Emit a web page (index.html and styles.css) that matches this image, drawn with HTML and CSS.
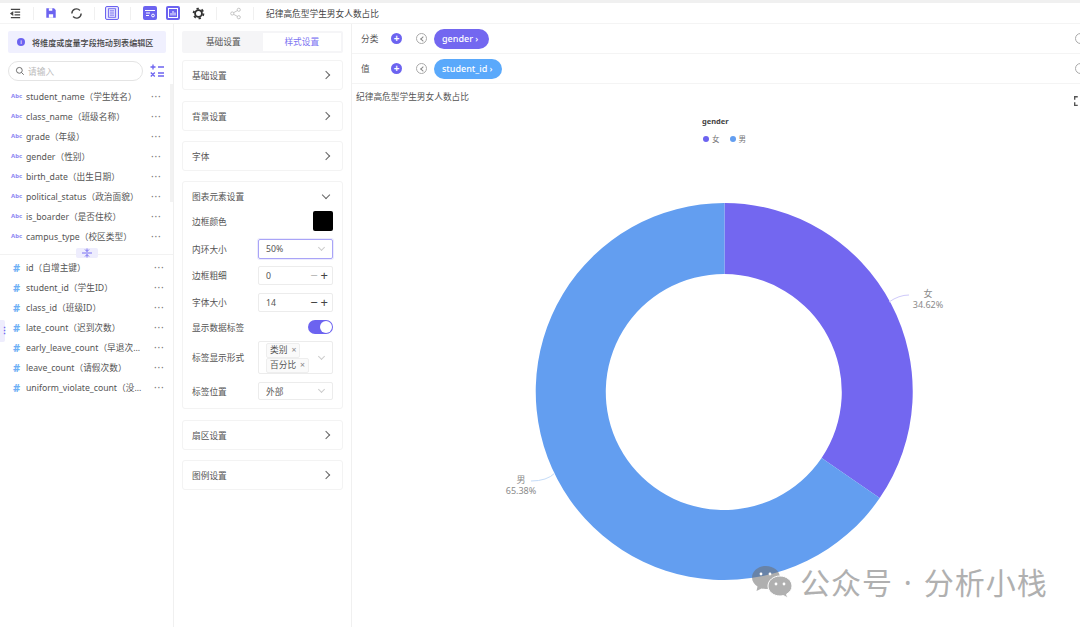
FILE: index.html
```html
<!DOCTYPE html>
<html lang="en">
<head>
    <meta charset="UTF-8">
    <title>纪律高危型学生男女人数占比</title>
    <link rel="stylesheet" href="styles.css">
</head>
<body>
    <div class="toolbar">
        <svg class="tool tool-first" viewBox="0 0 14 14" fill="none" stroke="#444" stroke-width="1.2"><path d="M2 2.500h10M6 5.500h6M6 8.500h6M2 11.500h10"/><path d="M4 5.500 2 7l2 1.500z" fill="#444"/></svg>
        <span class="sep sep-1"></span>
        <svg class="tool tool-save" viewBox="0 0 14 14"><path d="M1.500 1.500h9l2 2v9h-11z" fill="#6c63f0"/><path d="M4.500 1.500h4v3h-4zM4.500 8.500h5v4h-5z" fill="#fff"/></svg>
        <svg class="tool tool-refresh" viewBox="0 0 14 14" fill="none" stroke="#444" stroke-width="1.500"><path d="M12 7a5 5 0 0 1-8.700 3.300"/><path d="M2 7a5 5 0 0 1 8.700-3.300"/></svg>
        <span class="sep sep-2"></span>
        <span class="tool-box tool-doc"><svg viewBox="0 0 14 14" fill="none" stroke="#6c63f0" stroke-width="1"><rect x="3" y="2" width="8" height="10"/><path d="M4.500 4.500h5M4.500 7h5M4.500 9.500h5"/></svg></span>
        <span class="sep sep-3"></span>
        <span class="tool-box tool-win"><svg viewBox="0 0 14 14" fill="none" stroke="#fff" stroke-width="1"><path d="M2 4.500h10M3 7h4M3 9.500h3"/><circle cx="10" cy="9.500" r="1.400"/></svg></span>
        <span class="tool-box tool-chart"><svg viewBox="0 0 14 14" fill="none" stroke="#fff" stroke-width="1"><rect x="2.500" y="2.500" width="9" height="9"/><path d="M5 9.500V7M7 9.500V5M9 9.500V6.500"/></svg></span>
        <svg class="tool tool-gear" viewBox="0 0 14 14" fill="none" stroke="#333"><circle cx="7" cy="7" r="3.700" stroke-width="2"/><circle cx="7" cy="7" r="5.300" stroke-width="2" stroke-dasharray="2.500 3.050"/></svg>
        <span class="sep sep-4"></span>
        <svg class="tool tool-share" viewBox="0 0 14 14" fill="none" stroke="#bbb" stroke-width=".9"><circle cx="3.500" cy="7" r="1.700"/><circle cx="10.500" cy="3" r="1.700"/><circle cx="10.500" cy="11" r="1.700"/><path d="M5 6.100 9 3.900M5 7.900l4 2.200"/></svg>
        <span class="sep sep-5"></span>
        <span class="toolbar-title">纪律高危型学生男女人数占比</span>
    </div>

    <div class="main">
        <div class="fields">
            <div class="notice"><span class="notice-dot">i</span>将维度或度量字段拖动到表编辑区</div>
            <div class="search-row">
                <div class="search">
                    <svg viewBox="0 0 12 12" fill="none" stroke="#555" stroke-width="1"><circle cx="5.200" cy="5.200" r="3.500"/><path d="m8 8 2.500 2.500"/></svg>
                    <span>请输入</span>
                </div>
                <svg class="calc" viewBox="0 0 14 14" fill="none" stroke="#6c63f0" stroke-width="1.300"><path d="M0.500 3h5M3 0.500v5M8 3h6M0.800 8.500l4 4M4.800 8.500l-4 4M8 9h6M8 12h6"/></svg>
            </div>
            <div class="field-list dims">
                <div class="field"><span class="abc">Abc</span><span class="field-name">student_name（学生姓名）</span><span class="more">···</span></div>
                <div class="field"><span class="abc">Abc</span><span class="field-name">class_name（班级名称）</span><span class="more">···</span></div>
                <div class="field"><span class="abc">Abc</span><span class="field-name">grade（年级）</span><span class="more">···</span></div>
                <div class="field"><span class="abc">Abc</span><span class="field-name">gender（性别）</span><span class="more">···</span></div>
                <div class="field"><span class="abc">Abc</span><span class="field-name">birth_date（出生日期）</span><span class="more">···</span></div>
                <div class="field"><span class="abc">Abc</span><span class="field-name">political_status（政治面貌）</span><span class="more">···</span></div>
                <div class="field"><span class="abc">Abc</span><span class="field-name">is_boarder（是否住校）</span><span class="more">···</span></div>
                <div class="field"><span class="abc">Abc</span><span class="field-name">campus_type（校区类型）</span><span class="more">···</span></div>
                <span class="scrollbar"></span>
            </div>
            <div class="splitter">
                <span class="grip"><svg viewBox="0 0 22 10" fill="none" stroke="#6c63f0" stroke-width=".9"><path d="M6 5h10M9 1.500l2 2 2-2M11 .5v3M9 8.500l2-2 2 2M11 6.500v3"/></svg></span>
            </div>
            <div class="field-list measures">
                <div class="field"><span class="hash">#</span><span class="field-name">id（自增主键）</span><span class="more">···</span></div>
                <div class="field"><span class="hash">#</span><span class="field-name">student_id（学生ID）</span><span class="more">···</span></div>
                <div class="field"><span class="hash">#</span><span class="field-name">class_id（班级ID）</span><span class="more">···</span></div>
                <div class="field"><span class="hash">#</span><span class="field-name">late_count（迟到次数）</span><span class="more">···</span></div>
                <div class="field"><span class="hash">#</span><span class="field-name">early_leave_count（早退次...</span><span class="more">···</span></div>
                <div class="field"><span class="hash">#</span><span class="field-name">leave_count（请假次数）</span><span class="more">···</span></div>
                <div class="field"><span class="hash">#</span><span class="field-name">uniform_violate_count（没...</span><span class="more">···</span></div>
            </div>
            <span class="side-handle">⋮</span>
        </div>

        <div class="settings">
            <div class="tabs">
                <span class="tab">基础设置</span>
                <span class="tab tab-active">样式设置</span>
            </div>
            <div class="card card-first"><span>基础设置</span><span class="chev"></span></div>
            <div class="card"><span>背景设置</span><span class="chev"></span></div>
            <div class="card"><span>字体</span><span class="chev"></span></div>
            <div class="card-open">
                <div class="open-head"><span>图表元素设置</span><span class="chev chev-down"></span></div>
                <div class="prop prop-color"><span>边框颜色</span><span class="swatch"></span></div>
                <div class="prop prop-ring"><span>内环大小</span><div class="input input-focus"><span>50%</span><span class="caret"></span></div></div>
                <div class="prop prop-num"><span>边框粗细</span><div class="input"><span>0</span><span class="stepper"><i class="dim">−</i><i>+</i></span></div></div>
                <div class="prop prop-num"><span>字体大小</span><div class="input"><span>14</span><span class="stepper"><i>−</i><i>+</i></span></div></div>
                <div class="prop prop-switch"><span>显示数据标签</span><span class="switch"></span></div>
                <div class="prop prop-tags"><span>标签显示形式</span>
                    <div class="input input-tags">
                        <div class="tags"><span class="tag">类别<b>×</b></span><span class="tag">百分比<b>×</b></span></div>
                        <span class="caret"></span>
                    </div>
                </div>
                <div class="prop prop-pos"><span>标签位置</span><div class="input"><span>外部</span><span class="caret"></span></div></div>
            </div>
            <div class="card"><span>扇区设置</span><span class="chev"></span></div>
            <div class="card"><span>图例设置</span><span class="chev"></span></div>
        </div>

        <div class="content">
            <div class="shelf">
                <span class="shelf-label">分类</span>
                <span class="plus">+</span>
                <span class="back"></span>
                <span class="pill pill-purple">gender ›</span>
                <span class="shelf-end"></span>
            </div>
            <div class="shelf">
                <span class="shelf-label">值</span>
                <span class="plus">+</span>
                <span class="back"></span>
                <span class="pill pill-blue">student_id ›</span>
                <span class="shelf-end"></span>
            </div>
            <div class="chart">
                <div class="chart-title">纪律高危型学生男女人数占比</div>
                <svg class="fullscreen" viewBox="0 0 8 8" fill="none" stroke="#555" stroke-width="1.200"><path d="M0.500 3V.5H3M5 .5h2.500V3M7.500 5v2.500H5M3 7.500H.5V5"/></svg>
                <div class="legend">
                    <div class="legend-title">gender</div>
                    <div class="legend-items">
                        <span class="legend-item"><i class="dot dot-purple"></i>女</span>
                        <span class="legend-item"><i class="dot dot-blue"></i>男</span>
                    </div>
                </div>
                <svg class="donut" viewBox="0 0 729 544">
                    <path d="M373.500 120A188.500 188.500 0 0 1 528.700 415.100L470.600 375A118 118 0 0 0 373.500 191z" fill="#7367f0"/>
                    <path d="M528.700 415.100A188.500 188.500 0 1 1 373.500 120L373.500 191A118 118 0 1 0 470.600 375z" fill="#639ef0"/>
                    <path d="M538 219Q548 212 558 212" fill="none" stroke="#cfcafa" stroke-width="1"/>
                    <path d="M204 390Q196 398 180 398" fill="none" stroke="#c5dcf8" stroke-width="1"/>
                    <text class="slice-label" x="577" y="214" text-anchor="middle">女</text>
                    <text class="slice-label" x="577" y="225" text-anchor="middle">34.62%</text>
                    <text class="slice-label" x="170" y="400" text-anchor="middle">男</text>
                    <text class="slice-label" x="170" y="411" text-anchor="middle">65.38%</text>
                </svg>
            </div>
        </div>
    </div>

    <div class="watermark">
        <svg viewBox="0 0 40 34"><path d="M14 0C6.500 0 0 5 0 11.500c0 3.700 2.200 6.900 5.500 9L4.500 25l5-2.600c1.400.4 3 .6 4.500.6 7.500 0 14-5 14-11.500S21.500 0 14 0z" fill="#6d6d6d" fill-opacity=".55"/><path d="M28 10c-6.600 0-12 4.400-12 10s5.400 10 12 10c1.200 0 2.400-.2 3.500-.5l4 2.500-.9-3.900C37.900 26.300 40 23.400 40 20c0-5.600-5.400-10-12-10z" fill="#b0b0b0" stroke="#fff" stroke-width="1"/><circle cx="9" cy="8" r="1.400" fill="#fff"/><circle cx="18" cy="8" r="1.400" fill="#fff"/><circle cx="24" cy="18" r="1.400" fill="#fff"/><circle cx="32" cy="18" r="1.400" fill="#fff"/></svg>
        <span>公众号 · 分析小栈</span>
    </div>
</body>
</html>
```

FILE: styles.css
```css
* {
    box-sizing: border-box;
}
html, body {
    margin: 0;
    width: 1080px;
    height: 627px;
    overflow: hidden;
}
body {
    position: relative;
    background: #fff;
    color: #555;
    font-family: "Noto Sans", "Noto Sans CJK SC", sans-serif;
    font-size: 8.700px;
    border-top: 3px solid #f0f0f0;
}
i {
    font-style: normal;
}
b {
    font-weight: 400;
}

/* toolbar */
.toolbar {
    display: flex;
    align-items: center;
    height: 21px;
    border-bottom: 1px solid #f4f4f4;
}
.tool {
    width: 13px;
    height: 13px;
    flex: none;
}
.tool-first { margin-left: 9px; }
.tool-save { width: 12px; height: 12px; }
.tool-refresh { margin-left: 13px; }
.tool-gear { margin-left: 12px; }
.tool-share { margin-left: 12px; }
.tool-box {
    display: flex;
    width: 14px;
    height: 14px;
    flex: none;
    border-radius: 2px;
    background: #6c63f0;
}
.tool-box svg {
    width: 14px;
    height: 14px;
}
.tool-doc {
    background: #e4e2fd;
    border: 1px solid #6c63f0;
}
.tool-doc svg {
    width: 12px;
    height: 12px;
}
.tool-chart { margin-left: 9px; }
.sep {
    width: 1px;
    height: 13px;
    flex: none;
    background: #f0f0f0;
}
.sep-1 { margin: 0 11px; }
.sep-2 { margin: 0 10px 0 11px; }
.sep-3 { margin: 0 12px 0 11px; }
.sep-4 { margin: 0 0 0 11px; }
.sep-5 { margin: 0 12px 0 11px; }
.toolbar-title {
    color: #444;
}

.main {
    display: flex;
    height: 603px;
}

/* field list */
.fields {
    position: relative;
    width: 174px;
    flex: none;
    border-right: 1px solid #f0f0f0;
    padding-top: 7px;
}
.notice {
    display: flex;
    align-items: center;
    height: 22px;
    margin: 0 7px 0 8px;
    padding-left: 9px;
    border-radius: 2px;
    background: #f0f0fe;
    color: #444;
    font-size: 8.100px;
    font-weight: 500;
}
.notice-dot {
    width: 8px;
    height: 8px;
    margin-right: 7px;
    border-radius: 50%;
    background: #6c63f0;
    color: #fff;
    font-size: 6px;
    line-height: 8px;
    text-align: center;
}
.search-row {
    display: flex;
    align-items: center;
    margin: 8px 0 5px 8px;
}
.search {
    display: flex;
    align-items: center;
    gap: 3px;
    width: 135px;
    height: 20px;
    padding-left: 6px;
    border: 1px solid #e4e4e4;
    border-radius: 10px;
    color: #bbb;
}
.search svg {
    width: 10px;
    height: 10px;
}
.calc {
    width: 14px;
    height: 14px;
    margin-left: 7px;
}
.field-list {
    position: relative;
}
.field {
    display: flex;
    align-items: center;
    height: 20px;
    padding-left: 11px;
}
.abc {
    width: 15px;
    flex: none;
    color: #8b84f3;
    font-size: 6px;
    font-weight: 700;
}
.hash {
    width: 15px;
    flex: none;
    padding-left: 2px;
    color: #6eb0f5;
    font-size: 11px;
    font-weight: 700;
}
.field-name {
    flex: 1;
    white-space: nowrap;
    overflow: hidden;
}
.more {
    width: 22px;
    flex: none;
    color: #777;
    font-size: 10px;
    letter-spacing: .8px;
}
.measures .more {
    width: 19px;
}
.scrollbar {
    position: absolute;
    top: -2px;
    right: 0;
    width: 3px;
    height: 118px;
    background: #f2f2f2;
}
.splitter {
    position: relative;
    height: 9px;
    margin-top: 2px;
}
.splitter::before {
    content: "";
    position: absolute;
    left: 0;
    right: 0;
    top: 6px;
    border-top: 1px solid #f2f2f2;
}
.grip {
    position: absolute;
    left: 76px;
    top: 0;
    width: 22px;
    height: 10px;
    border-radius: 2px;
    background: #eeedfd;
}
.grip svg {
    display: block;
    width: 22px;
    height: 10px;
}
.side-handle {
    position: absolute;
    left: 0;
    top: 296px;
    width: 5px;
    height: 22px;
    border-radius: 0 2px 2px 0;
    background: #eeedfd;
    color: #6c63f0;
    font-size: 9px;
    font-weight: 700;
    line-height: 22px;
    text-align: center;
}

/* settings column */
.settings {
    width: 178px;
    flex: none;
    padding: 7px 8px 0;
    border-right: 1px solid #f0f0f0;
}
.tabs {
    display: flex;
    height: 22px;
    margin-bottom: 7px;
    padding: 2px;
    border-radius: 2px;
    background: #f5f5f7;
}
.tab {
    flex: 1;
    line-height: 18px;
    text-align: center;
}
.tab-active {
    background: #fff;
    color: #7c74f2;
}
.card {
    display: flex;
    align-items: center;
    justify-content: space-between;
    height: 30px;
    margin-bottom: 10px;
    padding: 0 13px 0 9px;
    border: 1px solid #f3f3f3;
    border-radius: 3px;
}
.card-first {
    margin-bottom: 11px;
}
.chev {
    width: 6px;
    height: 6px;
    border-top: 1px solid #666;
    border-right: 1px solid #666;
    transform: rotate(45deg);
}
.chev-down {
    margin-right: 2px;
    transform: translateY(-2px) rotate(135deg);
}
.card-open {
    height: 228px;
    margin-bottom: 11px;
    padding: 0 9px;
    border: 1px solid #f3f3f3;
    border-radius: 3px;
}
.open-head {
    display: flex;
    align-items: center;
    justify-content: space-between;
    height: 29px;
    padding-right: 2px;
}
.prop {
    display: flex;
    align-items: center;
    justify-content: space-between;
}
.prop-color { height: 20px; margin-bottom: 8px; }
.prop-ring { height: 20px; margin-bottom: 7px; }
.prop-num { height: 19px; margin-bottom: 8px; }
.prop-switch { height: 14px; margin: 1px 0 7px; }
.prop-tags { height: 33px; margin-bottom: 8px; }
.prop-pos { height: 18px; }
.swatch {
    width: 20px;
    height: 20px;
    border-radius: 2px;
    background: #000;
}
.input {
    display: flex;
    align-items: center;
    justify-content: space-between;
    width: 75px;
    height: 100%;
    padding: 0 4px 0 7px;
    border: 1px solid #ececec;
    border-radius: 2px;
}
.input-focus {
    border-color: #a9a4f7;
    box-shadow: 0 0 0 1px #ecebfd;
}
.caret {
    width: 5px;
    height: 5px;
    margin: -3px 4px 0 0;
    border-right: 1px solid #ccc;
    border-bottom: 1px solid #ccc;
    transform: rotate(45deg);
}
.stepper {
    display: flex;
    gap: 3px;
    color: #444;
    font-size: 13px;
    line-height: 13px;
}
.stepper .dim {
    color: #bbb;
}
.tags {
    display: flex;
    flex-direction: column;
    align-items: flex-start;
}
.tag {
    height: 15px;
    padding: 0 3px;
    border: 1px solid #eee;
    border-radius: 2px;
    background: #fafafa;
    line-height: 13px;
}
.tag b {
    margin-left: 4px;
    color: #888;
}
.switch {
    position: relative;
    width: 25px;
    height: 14px;
    border-radius: 7px;
    background: #6c63f0;
}
.switch::after {
    content: "";
    position: absolute;
    right: 1px;
    top: 1px;
    width: 12px;
    height: 12px;
    border-radius: 50%;
    background: #fff;
}

/* chart side */
.content {
    flex: 1;
    min-width: 0;
}
.shelf {
    position: relative;
    display: flex;
    align-items: center;
    height: 30px;
    padding-left: 9px;
    border-bottom: 1px solid #f4f4f4;
}
.shelf-label {
    width: 30px;
}
.plus {
    width: 11px;
    height: 11px;
    border-radius: 50%;
    background: #6c63f0;
    color: #fff;
    font-size: 10px;
    font-weight: 700;
    line-height: 10px;
    text-align: center;
}
.back {
    position: relative;
    width: 11px;
    height: 11px;
    margin: 0 7px 0 14px;
    border: 1px solid #aaa;
    border-radius: 50%;
}
.back::after {
    content: "";
    position: absolute;
    left: 3.500px;
    top: 2.500px;
    width: 3px;
    height: 3px;
    border-left: 1px solid #888;
    border-bottom: 1px solid #888;
    transform: rotate(45deg);
}
.pill {
    height: 20px;
    padding-left: 8px;
    border-radius: 10px;
    color: #fff;
    font-size: 9px;
    font-weight: 500;
    line-height: 20px;
}
.pill-purple {
    width: 55px;
    background: #7367f0;
}
.pill-blue {
    width: 68px;
    background: #5aa9fb;
}
.shelf-end {
    position: absolute;
    left: 723px;
    width: 11px;
    height: 11px;
    border: 1px solid #aaa;
    border-radius: 50%;
}
.chart {
    position: relative;
    height: 543px;
}
.chart-title {
    padding: 6px 0 0 4px;
}
.fullscreen {
    position: absolute;
    left: 722px;
    top: 12px;
    width: 10px;
    height: 10px;
}
.legend {
    position: absolute;
    left: 350px;
    top: 32px;
}
.legend-title {
    color: #444;
    font-size: 7.500px;
    font-weight: 700;
}
.legend-items {
    display: flex;
    gap: 10px;
    margin: 7px 0 0 1px;
    color: #777;
    font-size: 7.500px;
}
.legend-item {
    display: flex;
    align-items: center;
    gap: 3px;
}
.dot {
    width: 6px;
    height: 6px;
    border-radius: 50%;
}
.dot-purple { background: #6c63f0; }
.dot-blue { background: #639ef0; }
.donut {
    position: absolute;
    left: -1px;
    top: -1px;
    width: 729px;
    height: 544px;
}
.slice-label {
    fill: #8a8a8a;
    font-size: 9px;
}

/* watermark over the page */
.watermark {
    position: absolute;
    left: 752px;
    top: 563px;
    display: flex;
    align-items: center;
    gap: 8px;
    color: #b0b0b0;
    font-size: 30px;
    line-height: 34px;
    letter-spacing: 1px;
    word-spacing: 2px;
    white-space: nowrap;
}
.watermark svg {
    width: 40px;
    height: 34px;
}
```
